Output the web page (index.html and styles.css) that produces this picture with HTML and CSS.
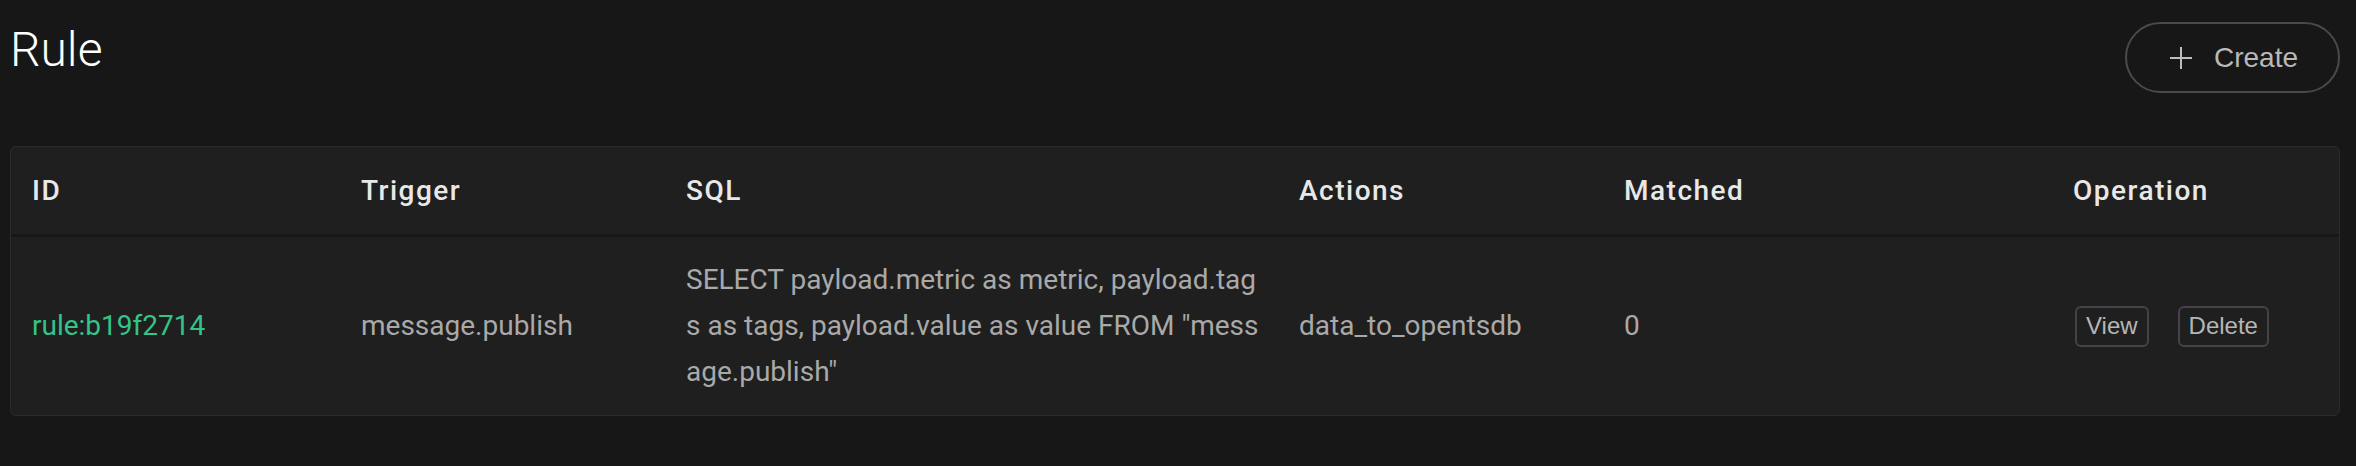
FILE: index.html
```html
<!DOCTYPE html>
<html lang="en">
<head>
<meta charset="utf-8">
<title>Rule</title>
<link rel="stylesheet" href="styles.css">
</head>
<body>
<div class="page">
  <header class="page-head">
    <h1 class="title">Rule</h1>
    <button class="btn-create" type="button">
      <svg class="plus" width="24" height="24" viewBox="0 0 24 24" aria-hidden="true">
        <path d="M12 1V23M1 12H23" stroke="currentColor" stroke-width="2" fill="none"/>
      </svg>
      <span>Create</span>
    </button>
  </header>

  <div class="card">
    <div class="row head">
      <div class="cell">ID</div>
      <div class="cell">Trigger</div>
      <div class="cell">SQL</div>
      <div class="cell">Actions</div>
      <div class="cell">Matched</div>
      <div class="cell">Operation</div>
    </div>
    <div class="row body">
      <div class="cell"><a class="link" href="#">rule:b19f2714</a></div>
      <div class="cell">message.publish</div>
      <div class="cell sql">SELECT payload.metric as metric, payload.tags as tags, payload.value as value FROM "message.publish"</div>
      <div class="cell">data_to_opentsdb</div>
      <div class="cell">0</div>
      <div class="cell ops">
        <button class="btn-sm" type="button">View</button>
        <button class="btn-sm" type="button">Delete</button>
      </div>
    </div>
  </div>
</div>
</body>
</html>
```

FILE: styles.css
```css
html, body {
  margin: 0;
  background: #171717;
}

body {
  font-family: Roboto, "Liberation Sans", Arial, sans-serif;
}

.page {
  padding: 22px 16px 0 10px;
}

.page-head {
  display: flex;
  justify-content: space-between;
  align-items: flex-start;
  margin-bottom: 53px;
}

.title {
  margin: 0;
  font-family: Roboto, sans-serif;
  font-weight: 300;
  font-size: 48px;
  line-height: 56px;
  color: #ffffff;
}

.btn-create {
  box-sizing: border-box;
  height: 71px;
  display: flex;
  align-items: center;
  gap: 21px;
  padding: 0 40px 0 42px;
  border: 2px solid #4a4a4a;
  border-radius: 36px;
  background: transparent;
  color: #b9b9b9;
  font-family: "Liberation Sans", Arial, sans-serif;
  font-size: 28px;
  cursor: pointer;
}

.plus {
  display: block;
  color: #bdbdbd;
}

.card {
  border: 1px solid #2b2b2b;
  border-radius: 6px;
  background: #1f1f1f;
  overflow: hidden;
}

.row {
  display: grid;
  grid-template-columns: 329px 325px 613px 325px 449px 1fr;
  align-items: center;
}

.row.head {
  height: 87px;
  border-bottom: 3px solid #171717;
}

.row.body {
  height: 178px;
}

.cell {
  padding: 0 21px;
}

.head .cell {
  font-family: Roboto, sans-serif;
  font-weight: 500;
  font-size: 28px;
  letter-spacing: 1.5px;
  color: #e8e8e8;
}

.body .cell {
  font-family: Roboto, sans-serif;
  font-size: 28px;
  line-height: 46px;
  color: #a9a9a9;
}

.sql {
  word-break: break-all;
  padding-right: 16px;
}

.link {
  color: #34c388;
  text-decoration: none;
}

.ops {
  display: flex;
  align-items: center;
  gap: 29px;
  padding-left: 23px;
}

.btn-sm {
  box-sizing: border-box;
  height: 41px;
  padding: 0 9px;
  border: 2px solid #444448;
  border-radius: 6px;
  background: transparent;
  color: #b6b6b6;
  font-family: "Liberation Sans", Arial, sans-serif;
  font-size: 24px;
  line-height: 1;
  cursor: pointer;
}
```
